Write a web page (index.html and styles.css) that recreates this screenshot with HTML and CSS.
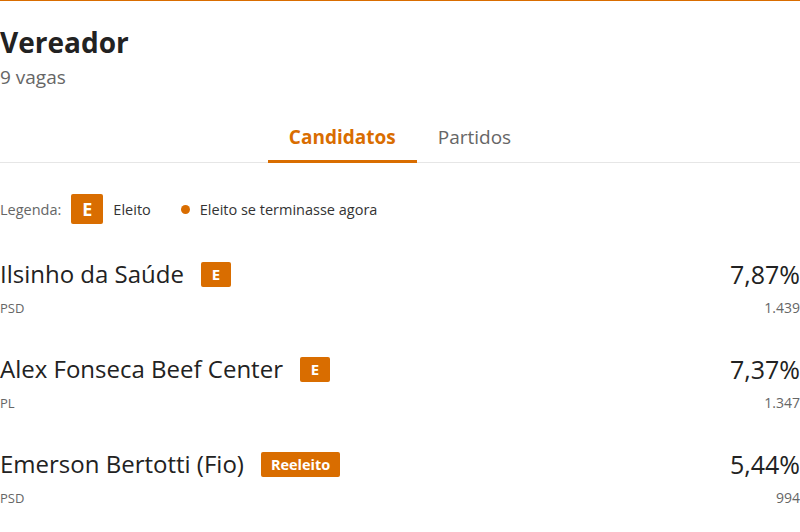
FILE: index.html
```html
<!DOCTYPE html>
<html lang="pt-BR">
<head>
    <meta charset="UTF-8">
    <meta name="viewport" content="width=device-width, initial-scale=1.0">
    <title>Vereador</title>
    <link rel="stylesheet" href="styles.css">
</head>
<body>
    <div class="apuracao">
        <header class="cargo">
            <h1>Vereador</h1>
            <p class="vagas">9 vagas</p>
        </header>

        <nav class="tabs">
            <a class="tab active" href="#">Candidatos</a>
            <a class="tab" href="#">Partidos</a>
        </nav>

        <div class="legenda">
            <span class="legenda-label">Legenda:</span>
            <span class="badge badge-lg">E</span>
            <span class="legenda-item">Eleito</span>
            <span class="dot"></span>
            <span class="legenda-item">Eleito se terminasse agora</span>
        </div>

        <ul class="candidatos">
            <li class="candidato">
                <div class="info">
                    <div class="nome-linha">
                        <span class="nome">Ilsinho da Saúde</span>
                        <span class="badge">E</span>
                    </div>
                    <span class="partido">PSD</span>
                </div>
                <div class="numeros">
                    <span class="percentual">7,87%</span>
                    <span class="votos">1.439</span>
                </div>
            </li>
            <li class="candidato">
                <div class="info">
                    <div class="nome-linha">
                        <span class="nome">Alex Fonseca Beef Center</span>
                        <span class="badge">E</span>
                    </div>
                    <span class="partido">PL</span>
                </div>
                <div class="numeros">
                    <span class="percentual">7,37%</span>
                    <span class="votos">1.347</span>
                </div>
            </li>
            <li class="candidato">
                <div class="info">
                    <div class="nome-linha">
                        <span class="nome">Emerson Bertotti (Fio)</span>
                        <span class="badge badge-text">Reeleito</span>
                    </div>
                    <span class="partido">PSD</span>
                </div>
                <div class="numeros">
                    <span class="percentual">5,44%</span>
                    <span class="votos">994</span>
                </div>
            </li>
        </ul>
    </div>
</body>
</html>
```

FILE: styles.css
```css
/* Apuracao - vereador */
body {
    margin: 0;
    font-family: "Open Sans", Arial, sans-serif;
    background-color: #fff;
    color: #222;
}

.apuracao {
    border-top: 1px solid #d96d00;
    width: 800px;
    overflow: hidden;
}

.cargo {
    padding-top: 24px;
}

h1 {
    margin: 0;
    font-size: 28px;
    line-height: 34px;
    font-weight: 700;
    color: #222;
}

.vagas {
    margin: 6px 0 0;
    font-size: 19px;
    line-height: 24px;
    color: #666;
}

.tabs {
    display: flex;
    justify-content: center;
    margin-top: 28px;
    border-bottom: 1px solid #e6e6e6;
}

.tab {
    padding: 8px 21px 11px;
    font-size: 19px;
    line-height: 24px;
    color: #666;
    text-decoration: none;
    border-bottom: 3px solid transparent;
    margin-bottom: -1px;
}

.tab.active {
    color: #d96d00;
    font-weight: 700;
    border-bottom-color: #d96d00;
}

.legenda {
    display: flex;
    align-items: center;
    margin-top: 31px;
    font-size: 14.5px;
    color: #333;
}

.legenda-label {
    color: #666;
    margin-right: 10px;
}

.legenda-item {
    margin-left: 10px;
}

.dot {
    width: 9px;
    height: 9px;
    border-radius: 50%;
    background-color: #d96d00;
    margin-left: 30px;
}

.badge {
    display: inline-flex;
    align-items: center;
    justify-content: center;
    width: 30px;
    height: 25px;
    border-radius: 2px;
    background-color: #d96d00;
    color: #fff;
    font-size: 15px;
    font-weight: 700;
}

.badge-lg {
    width: 32px;
    height: 30px;
    font-size: 18px;
}

.badge-text {
    width: auto;
    padding: 0 10px;
    font-size: 14.5px;
}

.candidatos {
    list-style: none;
    margin: 32px 0 0;
    padding: 0;
}

.candidato {
    display: flex;
    justify-content: space-between;
    height: 95px;
}

.info,
.numeros {
    display: flex;
    flex-direction: column;
}

.numeros {
    align-items: flex-end;
}

.nome-linha {
    display: flex;
    align-items: center;
    gap: 17px;
    height: 36px;
}

.nome {
    font-size: 24px;
    line-height: 36px;
    color: #222;
}

.partido {
    margin-top: 7px;
    font-size: 13px;
    line-height: 18px;
    color: #666;
}

.percentual {
    font-size: 25px;
    line-height: 36px;
    color: #222;
}

.votos {
    margin-top: 7px;
    font-size: 14px;
    line-height: 18px;
    color: #666;
}
```
